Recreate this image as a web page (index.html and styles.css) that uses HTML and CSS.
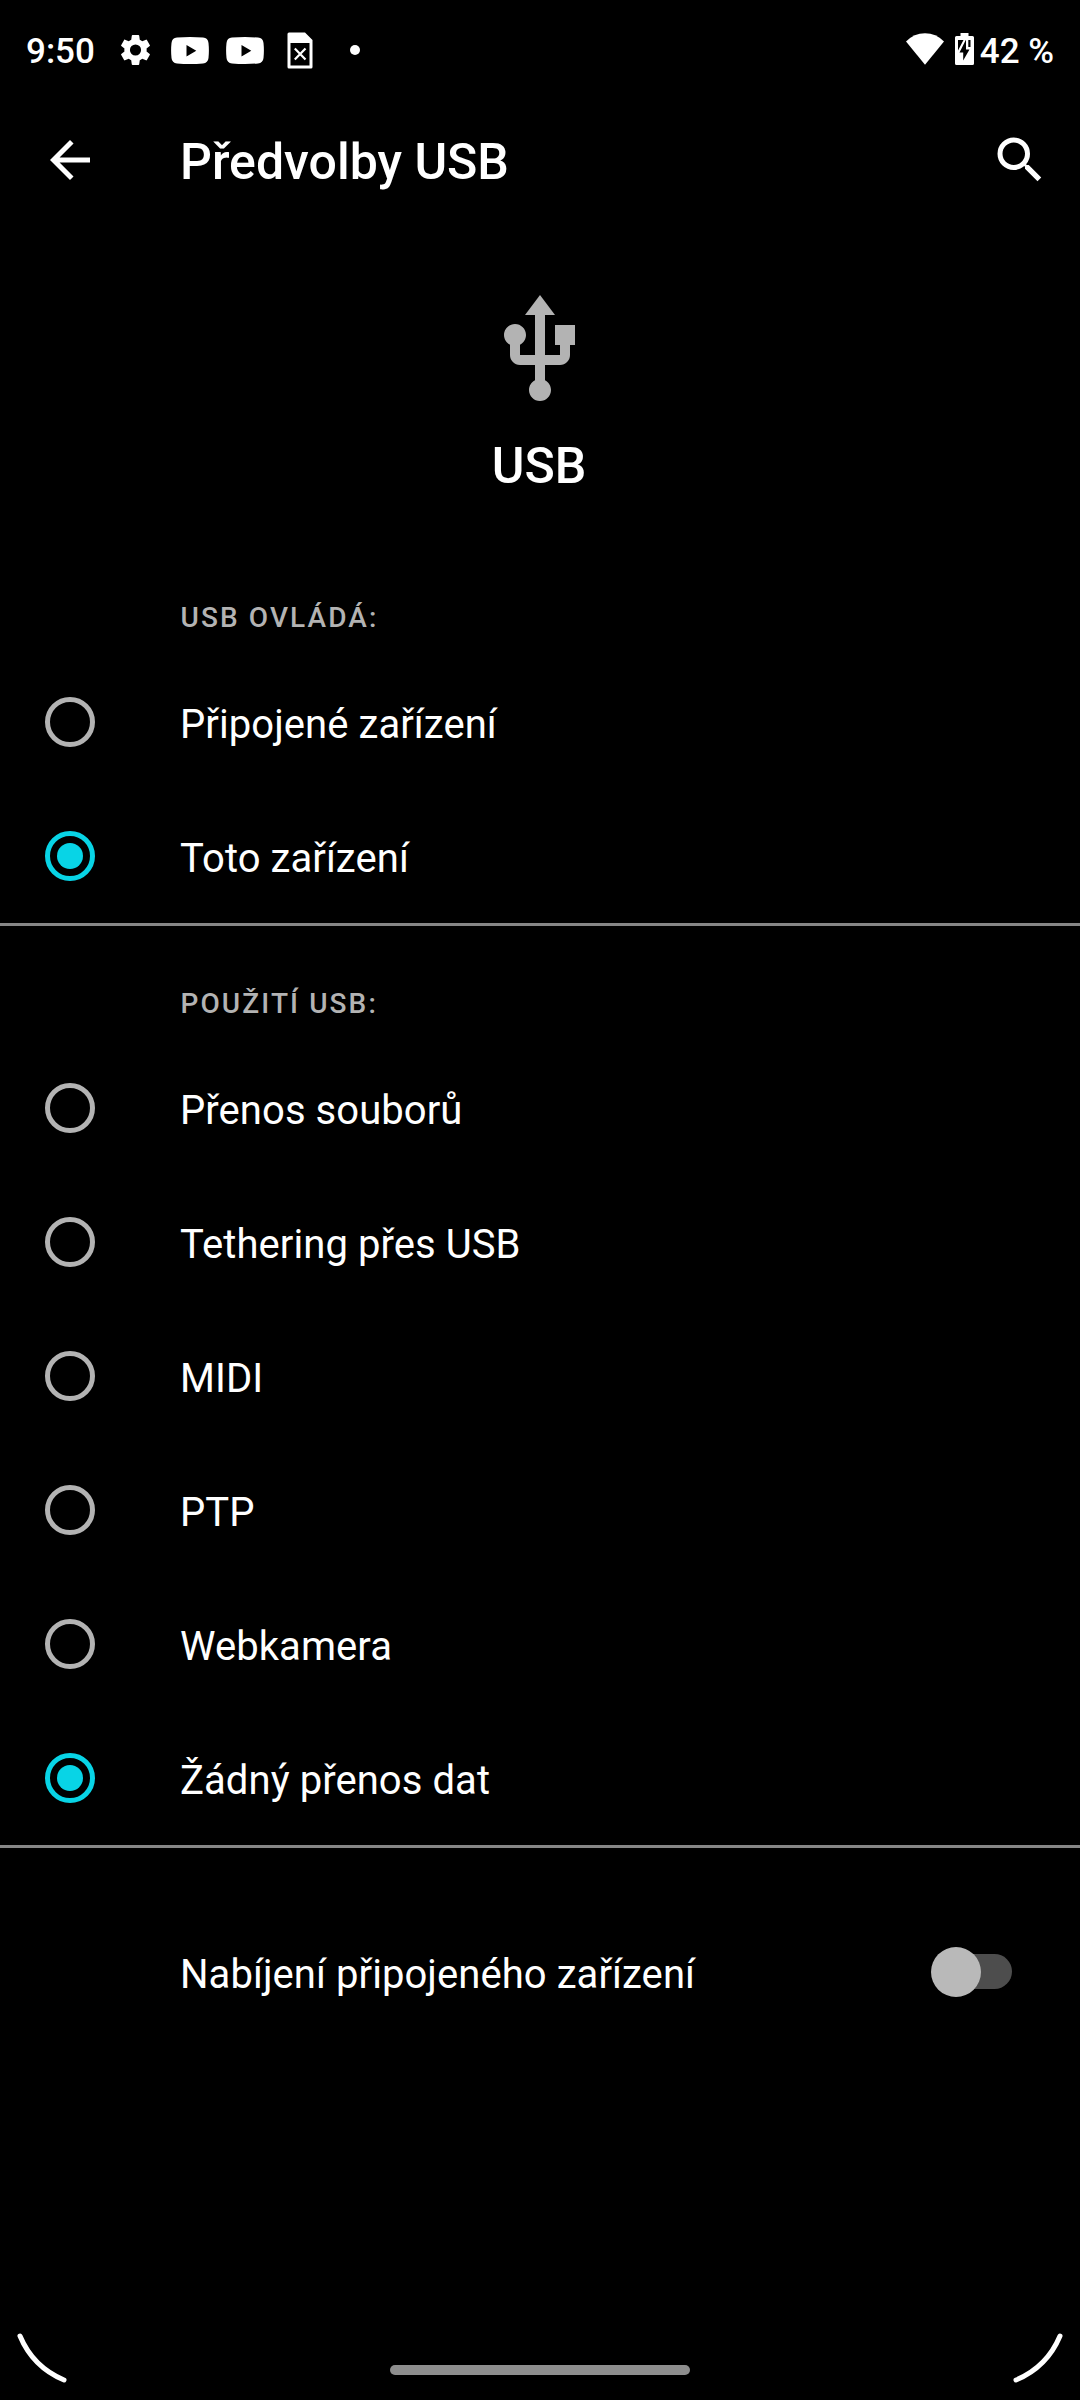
FILE: index.html
```html
<!DOCTYPE html>
<html lang="cs">
<head>
<meta charset="utf-8">
<title>Předvolby USB</title>
<link rel="stylesheet" href="styles.css">
</head>
<body>
<div class="screen">
  <div class="status-bar">
    <span class="clock">9:50</span>
    <div class="notifications">
      <svg class="gear" viewBox="2 2 20 20"><path fill-rule="evenodd" d="M19.14 12.94c.04-.3.06-.61.06-.94 0-.32-.02-.64-.07-.94l2.03-1.58a.49.49 0 0 0 .12-.61l-1.92-3.32a.488.488 0 0 0-.59-.22l-2.39.96c-.5-.38-1.03-.7-1.62-.94l-.36-2.54a.484.484 0 0 0-.48-.41h-3.84c-.24 0-.43.17-.47.41l-.36 2.54c-.59.24-1.13.57-1.62.94l-2.39-.96c-.22-.08-.47 0-.59.22L2.74 8.87c-.12.21-.08.47.12.61l2.03 1.58c-.05.3-.09.63-.09.94s.02.64.07.94l-2.03 1.58a.49.49 0 0 0-.12.61l1.92 3.32c.12.22.37.29.59.22l2.39-.96c.5.38 1.03.7 1.62.94l.36 2.54c.05.24.24.41.48.41h3.84c.24 0 .44-.17.47-.41l.36-2.54c.59-.24 1.13-.56 1.62-.94l2.39.96c.22.08.47 0 .59-.22l1.92-3.32c.12-.22.07-.47-.12-.61l-2.01-1.58zM12 15.6A3.6 3.6 0 1 1 12 8.4a3.6 3.6 0 0 1 0 7.2z"/></svg>
      <svg class="video first" viewBox="0 0 38 27"><path fill-rule="evenodd" d="M6 .6Q19-.4 32 .6 37 1 37.500 6q.8 7.500 0 15-.5 5-5.500 5.400-13 1-26 0Q1 26 .5 21q-.8-7.500 0-15Q1 1 6 .6zM15.500 8v11.400L25.300 13.700z"/></svg>
      <svg class="video" viewBox="0 0 38 27"><path fill-rule="evenodd" d="M6 .6Q19-.4 32 .6 37 1 37.500 6q.8 7.500 0 15-.5 5-5.500 5.400-13 1-26 0Q1 26 .5 21q-.8-7.500 0-15Q1 1 6 .6zM15.500 8v11.400L25.300 13.700z"/></svg>
      <svg class="file" viewBox="0 0 26 37"><path fill-rule="evenodd" d="M2 .5h16L25.500 8v27q0 1.500-1.500 1.500H2Q.5 36.500.5 35V2Q.5.5 2 .5zM3.500 11v22.500h19V11z"/><path class="cross" d="M7.800 16.500 18.500 27.500M18.500 16.500 7.800 27.500"/></svg>
      <span class="more-dot"></span>
    </div>
    <div class="system">
      <svg class="wifi" viewBox="0 0 38 32"><path d="M0 8.500Q8 .2 19 .2T38 8.500L19 31.800z"/></svg>
      <svg class="battery" viewBox="0 0 19 32"><path fill-rule="evenodd" d="M5.500 0h8v3H17.500q1.500 0 1.500 1.500v26q0 1.500-1.500 1.500h-16Q0 32 0 30.500v-26Q0 3 1.500 3h4zM3 7v10.500L8.500 7zM10.800 7 4.500 19.500H8.200v8L14.500 16.500H11V7zM13.300 7v7h2.200V7z"/></svg>
      <span class="percent">42 %</span>
    </div>
  </div>

  <header class="app-bar">
    <svg class="icon" viewBox="0 0 24 24"><path d="M20 11H7.830l5.590-5.590L12 4l-8 8 8 8 1.410-1.410L7.830 13H20v-2z"/></svg>
    <h1 class="title">Předvolby USB</h1>
    <svg class="icon" viewBox="0 0 24 24"><path d="M15.500 14h-.79l-.28-.27A6.471 6.471 0 0 0 16 9.500 6.500 6.500 0 1 0 9.500 16c1.610 0 3.090-.59 4.230-1.570l.27.28v.79l5 4.990L20.490 19l-4.990-5zm-6 0C7.010 14 5 11.990 5 9.500S7.010 5 9.500 5 14 7.010 14 9.500 11.990 14 9.500 14z"/></svg>
  </header>

  <div class="hero">
    <svg class="usb-icon" viewBox="0 0 24 24"><path d="M15 7v4h1v2h-3V5h2l-3-4-3 4h2v8H8v-2.070c.7-.37 1.200-1.080 1.200-1.930 0-1.210-.99-2.200-2.200-2.200-1.210 0-2.200.99-2.200 2.200 0 .85.5 1.560 1.200 1.930V13c0 1.110.89 2 2 2h3v3.050c-.71.37-1.200 1.100-1.200 1.950 0 1.220.99 2.200 2.200 2.200 1.210 0 2.200-.98 2.200-2.200 0-.85-.49-1.580-1.200-1.950V15h3c1.110 0 2-.89 2-2v-2h1V7h-4z"/></svg>
    <div class="hero-label">USB</div>
  </div>

  <section class="group">
    <h2 class="group-title">USB OVLÁDÁ:</h2>
    <div class="row"><span class="radio"></span><span class="label">Připojené zařízení</span></div>
    <div class="row"><span class="radio checked"></span><span class="label">Toto zařízení</span></div>
  </section>

  <section class="group">
    <h2 class="group-title">POUŽITÍ USB:</h2>
    <div class="row"><span class="radio"></span><span class="label">Přenos souborů</span></div>
    <div class="row"><span class="radio"></span><span class="label">Tethering přes USB</span></div>
    <div class="row"><span class="radio"></span><span class="label">MIDI</span></div>
    <div class="row"><span class="radio"></span><span class="label">PTP</span></div>
    <div class="row"><span class="radio"></span><span class="label">Webkamera</span></div>
    <div class="row"><span class="radio checked"></span><span class="label">Žádný přenos dat</span></div>
  </section>

  <div class="row switch-row">
    <span class="label">Nabíjení připojeného zařízení</span>
    <span class="switch"><span class="thumb"></span></span>
  </div>

  <footer class="nav">
    <svg class="corner" viewBox="0 0 52 52"><path d="M4 4Q17 35 48 48"/></svg>
    <span class="handle"></span>
    <svg class="corner" viewBox="0 0 52 52"><path d="M48 4Q35 35 4 48"/></svg>
  </footer>
</div>
</body>
</html>
```
FILE: styles.css
```css
* { box-sizing: border-box; }

body {
  margin: 0;
  background: #000;
  color: #fff;
  font-family: Roboto, "Noto Sans", sans-serif;
}

.screen {
  width: 1080px;
  height: 2400px;
  display: flex;
  flex-direction: column;
  overflow: hidden;
}

svg { display: block; flex: none; fill: #fff; }

.status-bar {
  height: 100px;
  padding: 0 26px;
  display: flex;
  align-items: center;
  font-size: 35px;
  font-weight: 500;
  line-height: 41px;
}
.clock { width: 94px; padding-top: 2px; }
.notifications { display: flex; align-items: center; }
.gear { width: 31px; height: 32px; }
.video { width: 38px; height: 27px; margin-left: 17px; }
.video.first { margin-left: 20px; }
.file { width: 26px; height: 37px; margin-left: 23px; }
.cross { fill: none; stroke: #fff; stroke-width: 2.2; }
.more-dot { width: 10px; height: 10px; margin-left: 37px; border-radius: 50%; background: #fff; }
.system { display: flex; align-items: center; margin-left: auto; }
.wifi { width: 38px; height: 32px; margin-top: -2px; }
.battery { width: 19px; height: 32px; margin: -2px 6px 0 11px; }
.percent { padding-top: 2px; white-space: nowrap; }

.app-bar {
  height: 120px;
  padding: 0 30px 0 40px;
  display: flex;
  align-items: center;
}
.icon { width: 60px; height: 60px; }
.title {
  flex: 1;
  margin: 0;
  padding: 4px 0 0 80px;
  font-size: 50px;
  font-weight: 500;
  line-height: 60px;
}

.hero {
  height: 320px;
  padding-top: 70px;
  display: flex;
  flex-direction: column;
  align-items: center;
}
.usb-icon { width: 120px; height: 120px; fill: #b3b3b3; }
.hero-label { margin-top: 26px; padding-right: 2px; font-size: 50px; font-weight: 500; line-height: 60px; }

.group { border-bottom: 3px solid #868686; }
.group-title {
  height: 115px;
  margin: 0;
  padding: 61px 0 0 180.5px;
  font-size: 28px;
  font-weight: 500;
  line-height: 33px;
  letter-spacing: 2.1px;
  color: #b3b3b3;
}
.row {
  height: 134px;
  padding-left: 45px;
  display: flex;
  align-items: center;
}
.label { padding-top: 5px; font-size: 40px; line-height: 47px; letter-spacing: 0.07px; }
.radio {
  width: 50px;
  height: 50px;
  margin-right: 85px;
  border: 5px solid #b3b3b3;
  border-radius: 50%;
  display: grid;
  place-items: center;
}
.radio.checked { border-color: #08d4e6; }
.radio.checked::after {
  content: "";
  width: 26px;
  height: 26px;
  border-radius: 50%;
  background: #08d4e6;
}

.switch-row {
  margin-top: 57px;
  padding: 0 68px 0 180px;
  justify-content: space-between;
}
.switch {
  width: 76px;
  height: 35px;
  margin-bottom: 1px;
  border-radius: 18px;
  background: #4d4d4d;
  display: flex;
  align-items: center;
}
.thumb {
  flex: none;
  width: 50px;
  height: 50px;
  margin-left: -5px;
  border-radius: 50%;
  background: #b9b9b9;
}

.nav {
  margin-top: auto;
  height: 68px;
  padding: 0 16px;
  display: flex;
  justify-content: space-between;
}
.corner { width: 52px; height: 52px; fill: none; stroke: #fff; stroke-width: 5; stroke-linecap: round; }
.handle { width: 300px; height: 10px; margin-top: 33px; border-radius: 5px; background: #8e8e8e; }
```
